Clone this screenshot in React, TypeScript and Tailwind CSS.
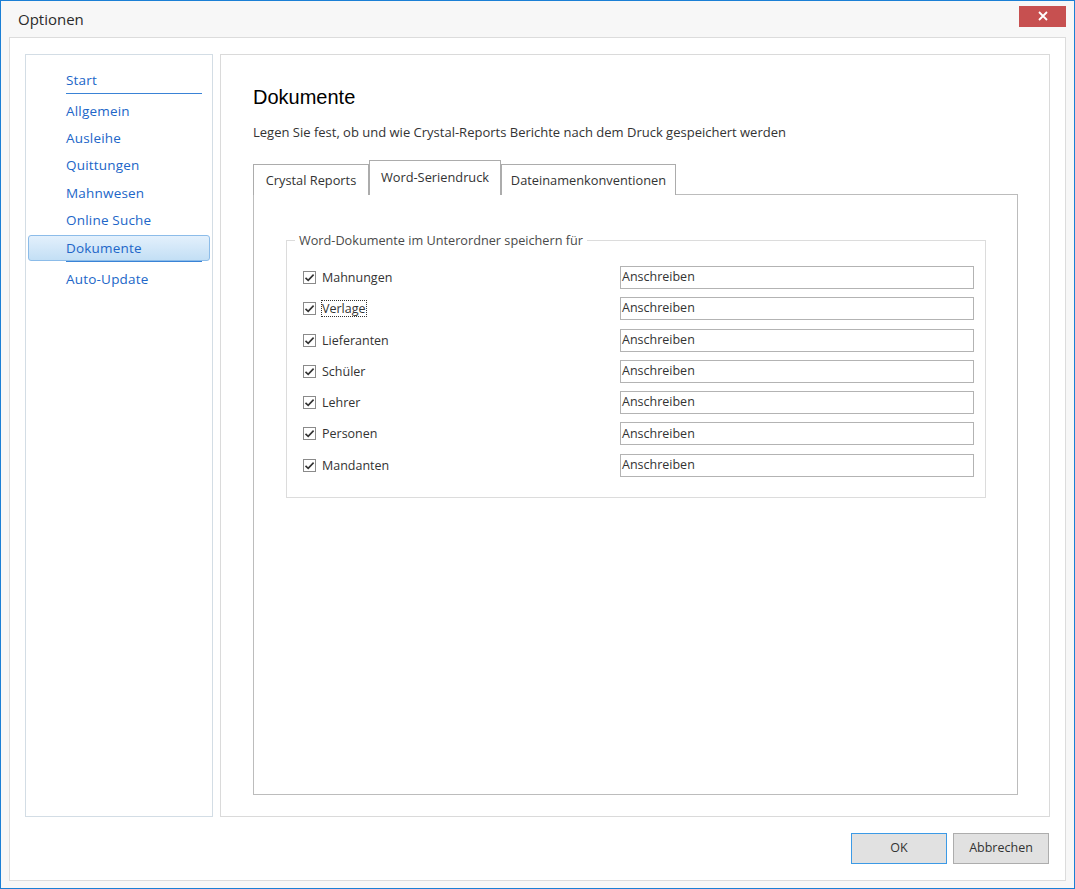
import React from "react";

const navItems = ["Allgemein", "Ausleihe", "Quittungen", "Mahnwesen", "Online Suche", "Dokumente"];
const rows = ["Mahnungen", "Verlage", "Lieferanten", "Schüler", "Lehrer", "Personen", "Mandanten"];

const ui = { fontFamily: '"Open Sans", "Noto Sans", sans-serif' };

const CheckBox = () => (
  <span className="w-[13px] h-[13px] border border-[#8a8a8a] bg-white flex items-center justify-center shrink-0">
    <svg width="11" height="11" viewBox="0 0 11 11">
      <path d="M1.5 5.8 L4.2 8.4 L9.6 2.6" fill="none" stroke="#333" strokeWidth="1.6" />
    </svg>
  </span>
);

const App = () => {
  return (
    <div
      className="w-[1075px] h-[889px] border border-[#1b7fd5] bg-[#f7f7f7] flex flex-col text-[#333]"
      style={ui}
    >
      {/* Titelleiste */}
      <div className="h-[36px] flex items-center justify-between pl-[17px] pr-[8px] shrink-0">
        <span className="text-[15px] text-[#2b2b2b]">Optionen</span>
        <button className="w-[47px] h-[21px] bg-[#c75050] flex items-center justify-center -mt-[6px]">
          <svg width="10" height="10" viewBox="0 0 10 10">
            <path d="M1 1 L9 9 M9 1 L1 9" stroke="#fff" strokeWidth="1.8" />
          </svg>
        </button>
      </div>

      {/* Inhalt */}
      <div className="mx-[8px] h-[844px] border border-[#dcdcdc] bg-white flex flex-col px-[15px] pt-[16px]">
        <div className="flex gap-[7px] h-[763px]">
          {/* Navigation */}
          <div className="w-[188px] border border-[#d3dde5] flex flex-col pt-[12px] text-[13.5px] tracking-[0.2px] text-[#2166c8]">
            <div className="h-[26px] flex items-center pl-[40px]">Start</div>
            <div className="h-px bg-[#3a83d6] ml-[40px] mr-[10px]" />
            <div className="mt-[3px] flex flex-col">
              {navItems.map((item) => (
                <div key={item} className="h-[27.4px] flex items-center">
                  {item === "Dokumente" ? (
                    <div className="mx-[2px] w-full h-[26px] rounded-[3px] border border-[#8cbce9] bg-gradient-to-b from-[#e3f0fc] to-[#c3dff5] flex items-center pl-[37px]">
                      {item}
                    </div>
                  ) : (
                    <span className="pl-[40px]">{item}</span>
                  )}
                </div>
              ))}
            </div>
            <div className="h-px bg-[#3a83d6] ml-[40px] mr-[10px]" />
            <div className="mt-[3px] h-[27.4px] flex items-center pl-[40px]">Auto-Update</div>
          </div>

          {/* Rechter Bereich */}
          <div className="flex-1 border border-[#dadada] flex flex-col pl-[32px] pr-[31px] pt-[31px] pb-[21px]">
            <h1 className="text-[20px] leading-[23px] text-black" style={{ fontFamily: '"Liberation Sans", Arial, sans-serif' }}>
              Dokumente
            </h1>
            <p className="mt-[14px] text-[13px] leading-[18px] text-[#333]">
              Legen Sie fest, ob und wie Crystal-Reports Berichte nach dem Druck gespeichert werden
            </p>

            {/* Tabs */}
            <div className="mt-[19px] flex items-end h-[35px] relative z-10 -mb-px text-[12.8px]">
              <div className="w-[116px] h-[31px] border border-b-0 border-[#acacac] bg-white flex items-center justify-center pt-[2px]">
                Crystal Reports
              </div>
              <div className="w-[132px] h-[35px] border border-b-0 border-[#acacac] bg-white flex items-center justify-center pb-[1px]">
                Word-Seriendruck
              </div>
              <div className="w-[175px] h-[31px] border border-b-0 border-[#acacac] bg-white flex items-center justify-center pt-[2px]">
                Dateinamenkonventionen
              </div>
            </div>
            <div className="flex-1 border border-[#bcbcbc] bg-white pl-[32px] pt-[37px]">
              <fieldset className="w-[700px] border border-[#dcdcdc] pl-[16px] pr-[11px] pt-[17px] pb-[20px]">
                <legend className="-ml-[8px] px-[4px] text-[12.7px] leading-[17px] text-[#4a4a4a]">
                  Word-Dokumente im Unterordner speichern für
                </legend>
                <div className="flex flex-col gap-[8.3px] text-[12.5px]">
                  {rows.map((row) => (
                    <div key={row} className="flex items-center h-[23px]">
                      <div className="w-[317px] flex items-center gap-[6px]">
                        <CheckBox />
                        <span
                          className={`leading-[15px] ${
                            row === "Verlage" ? "outline outline-1 outline-dotted outline-[#333]" : ""
                          }`}
                        >
                          {row}
                        </span>
                      </div>
                      <div className="flex-1 h-[23px] border border-[#b3b3b3] flex items-center pl-[1px]">
                        Anschreiben
                      </div>
                    </div>
                  ))}
                </div>
              </fieldset>
            </div>
          </div>
        </div>

        {/* Buttons */}
        <div className="mt-[16px] flex justify-end gap-[6px] pr-[1px] text-[12.5px]">
          <button className="w-[96px] h-[31px] border border-[#3c9ae6] bg-[#e1e1e1] text-[#333]">OK</button>
          <button className="w-[96px] h-[31px] border border-[#adadad] bg-[#e1e1e1] text-[#333]">Abbrechen</button>
        </div>
      </div>
    </div>
  );
};

export default App;
